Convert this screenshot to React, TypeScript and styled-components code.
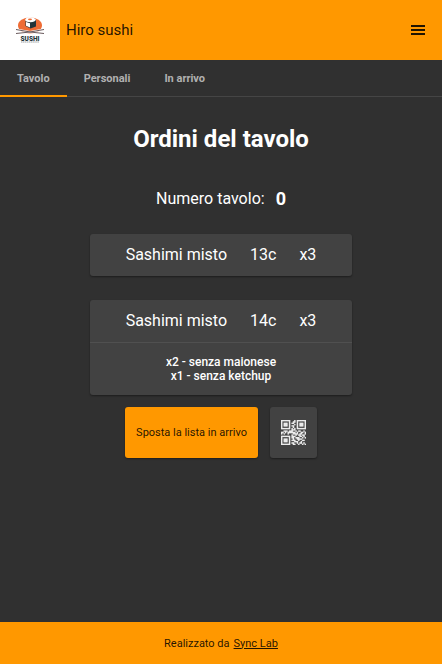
import React from "react";
import styled, { createGlobalStyle } from "styled-components";

const Global = createGlobalStyle`
  * { box-sizing: border-box; }
  body { margin: 0; background: #303030; color: #fff; font-family: Roboto, "Liberation Sans", sans-serif; }
  button { font: inherit; border: 0; cursor: pointer; }
`;

const Page = styled.div`
  display: flex;
  flex-direction: column;
  min-height: 100vh;
`;

const Header = styled.header`
  display: flex;
  align-items: center;
  height: 60px;
  background: #ff9800;
  color: rgba(0, 0, 0, 0.87);
`;

const LogoBox = styled.div`
  width: 60px;
  height: 60px;
  background: #fff;
`;

const Brand = styled.span`
  margin-left: 6px;
  font-size: 15px;
  line-height: 20px;
`;

const MenuButton = styled.button`
  display: flex;
  margin-left: auto;
  margin-right: 10px;
  padding: 4px;
  background: none;
  color: inherit;
`;

const Tabs = styled.nav`
  display: flex;
  height: 37px;
  border-bottom: 1px solid #454545;
`;

const Tab = styled.button<{ $active?: boolean }>`
  height: 37px;
  padding: 1px 17px 0;
  border: 0 solid ${(p) => (p.$active ? "#ff9800" : "transparent")};
  border-bottom-width: 2px;
  background: none;
  color: #b0b0b0;
  font-size: 11px;
  font-weight: 700;
`;

const Main = styled.main`
  flex: 1;
  display: flex;
  flex-direction: column;
  align-items: center;
  padding: 26px 16px;
`;

const Title = styled.h1`
  margin: 0;
  font-size: 24px;
  line-height: 32px;
  font-weight: 700;
`;

const TableNumber = styled.p`
  display: flex;
  align-items: center;
  gap: 11px;
  margin: 32px 0 23px;
  font-size: 16px;
  line-height: 24px;
`;

const Count = styled.strong`
  font-size: 18px;
`;

const Orders = styled.div`
  display: flex;
  flex-direction: column;
  gap: 24px;
`;

const Card = styled.article`
  border-radius: 3px;
  background: #424242;
  box-shadow: 0 1px 2px rgba(0, 0, 0, 0.4);
`;

const Dish = styled.div`
  display: flex;
  justify-content: center;
  gap: 23px;
  padding: 9px 36px;
  font-size: 16px;
  line-height: 24px;
`;

const Notes = styled.div`
  padding: 12px 16px;
  border-top: 1px solid #505050;
  font-size: 12px;
  line-height: 14px;
  font-weight: 500;
  text-align: center;
`;

const Actions = styled.div`
  display: flex;
  gap: 12px;
  margin-top: 12px;
`;

const Action = styled.button<{ $primary?: boolean }>`
  display: flex;
  align-items: center;
  height: 51px;
  padding: 0 11px;
  border-radius: 3px;
  background: ${(p) => (p.$primary ? "#ff9800" : "#424242")};
  color: ${(p) => (p.$primary ? "rgba(0, 0, 0, 0.87)" : "#eee")};
  font-size: 11px;
  box-shadow: 0 1px 2px rgba(0, 0, 0, 0.4);
`;

const Footer = styled.footer`
  display: flex;
  align-items: center;
  justify-content: center;
  gap: 4px;
  height: 42px;
  background: #ff9800;
  color: rgba(0, 0, 0, 0.87);
  font-size: 11px;
`;

const FooterLink = styled.a`
  color: inherit;
`;

const QR_ROWS = [
  "1111111000101111111",
  "1000001001101000001",
  "1011101011001011101",
  "1011101000101011101",
  "1011101011001011101",
  "1000001001001000001",
  "1111111010101111111",
  "0000000011100000000",
  "0011101110010110010",
  "1101011111101001101",
  "1010010001111011001",
  "0000000010010110110",
  "1111111011100011010",
  "1000001011011100101",
  "1011101001001111000",
  "1011101011100100110",
  "1011101000111001000",
  "1000001011001011010",
  "1111111001100100101",
];

function QrIcon() {
  return (
    <svg width="25" height="25" viewBox="0 0 19 19" aria-hidden="true">
      <path
        fill="currentColor"
        stroke="currentColor"
        strokeWidth=".15"
        d={QR_ROWS.flatMap((row, y) =>
          [...row].map((cell, x) => (cell === "1" ? `M${x} ${y}h1v1h-1z` : ""))
        ).join("")}
      />
    </svg>
  );
}

function SushiLogo() {
  return (
    <svg width="60" height="60" viewBox="0 0 60 60" role="img" aria-label="Sushi">
      <ellipse cx="30" cy="25.5" rx="12" ry="8" fill="#ef6c35" />
      <path d="M25.5 20l4.5-2.500 6 2v7l-5.500 2-5-2.500z" fill="#24343a" />
      <path d="M25 20q1-3 5-3t6 2.500q-1 2.700-5.500 2.700t-5.500-2.200z" fill="#fff" />
      <ellipse cx="30" cy="19.300" rx="2" ry=".9" fill="#ef6c35" />
      <path d="M26 22l4 1.200v4.300l-4-1.800z" fill="#fff" />
      <path d="M16 33.500q14-1 28-4M44 33.500q-14-1-28-4" fill="none" stroke="#fff" strokeWidth="2" />
      <path d="M16 33.500q14-1 28-4M44 33.500q-14-1-28-4" fill="none" stroke="#59474a" strokeWidth=".9" />
      <text x="30" y="40.500" textAnchor="middle" fontFamily="Roboto, sans-serif" fontSize="6.500" fontWeight="900" fill="#24343a">
        SUSHI
      </text>
      <path d="M21 42h18" stroke="#9da3a5" strokeWidth="1" strokeDasharray="1.500 .4" />
    </svg>
  );
}

function MenuIcon() {
  return (
    <svg width="20" height="20" viewBox="0 0 20 20" aria-hidden="true">
      <path d="M3 5h14v2H3zM3 9h14v2H3zM3 13h14v2H3z" fill="currentColor" />
    </svg>
  );
}

const orders = [
  { name: "Sashimi misto", code: "13c", quantity: 3, notes: [] },
  { name: "Sashimi misto", code: "14c", quantity: 3, notes: ["x2 - senza maionese", "x1 - senza ketchup"] },
];

export default function App() {
  return (
    <Page>
      <Global />
      <Header>
        <LogoBox>
          <SushiLogo />
        </LogoBox>
        <Brand>Hiro sushi</Brand>
        <MenuButton aria-label="Menu">
          <MenuIcon />
        </MenuButton>
      </Header>
      <Tabs>
        <Tab $active>Tavolo</Tab>
        <Tab>Personali</Tab>
        <Tab>In arrivo</Tab>
      </Tabs>
      <Main>
        <Title>Ordini del tavolo</Title>
        <TableNumber>
          Numero tavolo: <Count>0</Count>
        </TableNumber>
        <Orders>
          {orders.map((order) => (
            <Card key={order.code}>
              <Dish>
                <span>{order.name}</span>
                <span>{order.code}</span>
                <span>{`x${order.quantity}`}</span>
              </Dish>
              {order.notes.length > 0 && (
                <Notes>
                  {order.notes.map((note) => (
                    <div key={note}>{note}</div>
                  ))}
                </Notes>
              )}
            </Card>
          ))}
        </Orders>
        <Actions>
          <Action $primary>Sposta la lista in arrivo</Action>
          <Action aria-label="Codice QR">
            <QrIcon />
          </Action>
        </Actions>
      </Main>
      <Footer>
        <span>Realizzato da</span>
        <FooterLink href="#sync-lab">Sync Lab</FooterLink>
      </Footer>
    </Page>
  );
}
